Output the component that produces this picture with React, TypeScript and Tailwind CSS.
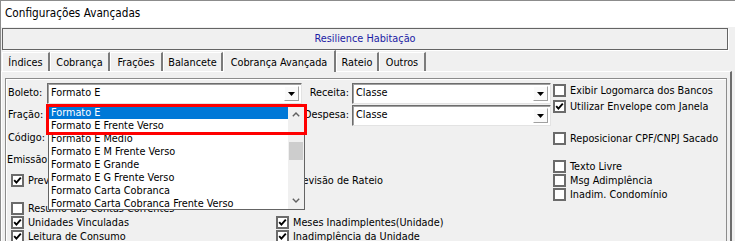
import React from 'react';

const Check = ({ checked }: { checked?: boolean }) => (
  <span className="w-[13px] h-[13px] border-2 border-[#6b6b6b] bg-white flex items-center justify-center shrink-0">
    {checked && (
      <svg width="9" height="9" viewBox="0 0 9 9">
        <path d="M1.2 4.2 L3.4 6.6 L7.8 1.6" stroke="#000" strokeWidth="1.9" fill="none" />
      </svg>
    )}
  </span>
);

const CheckRow = ({ label, checked, className = '' }: { label: string; checked?: boolean; className?: string }) => (
  <div className={`flex items-center gap-[4px] h-[14px] ${className}`}>
    <Check checked={checked} />
    <span className="leading-[13px] whitespace-nowrap">{label}</span>
  </div>
);

const Combo = ({ value, className = '' }: { value: string; className?: string }) => (
  <div className={`h-[21px] bg-white border border-t-[#6d6d6d] border-l-[#6d6d6d] border-r-[#e3e3e3] border-b-[#e3e3e3] shadow-[inset_1px_1px_0_#a0a0a0] flex items-center pl-[3px] pr-[2px] ${className}`}>
    <span className="flex-1 whitespace-nowrap">{value}</span>
    <span className="w-[15px] h-[15px] bg-[#fafafa] border-t border-l border-t-white border-l-white border-r border-b border-r-[#a0a0a0] border-b-[#a0a0a0] flex items-center justify-center">
      <svg width="7" height="4" viewBox="0 0 7 4">
        <path d="M0 0 H7 L3.5 4 Z" fill="#000" />
      </svg>
    </span>
  </div>
);

const TABS = ['Índices', 'Cobrança', 'Frações', 'Balancete', 'Cobrança Avançada', 'Rateio', 'Outros'];
const TAB_W = ['w-[48px]', 'w-[60px]', 'w-[53px]', 'w-[60px]', 'w-[113px]', 'w-[43px]', 'w-[47px]'];

const OPTIONS = [
  'Formato E',
  'Formato E Frente Verso',
  'Formato E Médio',
  'Formato E M Frente Verso',
  'Formato E Grande',
  'Formato E G Frente Verso',
  'Formato Carta Cobranca',
  'Formato Carta Cobranca Frente Verso',
];

export default function App() {
  return (
    <div className="relative w-[735px] h-[241px] overflow-hidden bg-[#f0f0f0] text-black font-['DejaVu_Sans_Condensed','Liberation_Sans',sans-serif] font-stretch-condensed text-[10.8px] border-l border-[#8c8c8c] flex flex-col">
      {/* Title */}
      <div className="h-[27px] shrink-0 bg-white border-t border-[#8c8c8c] flex items-center pl-[4px] text-[11.7px]">
        Configurações Avançadas
      </div>

      {/* Condomínio */}
      <div className="mt-[1px] ml-[1px] mr-[7px] h-[22px] shrink-0 border border-[#646464] shadow-[1px_1px_0_#ffffff] flex items-center justify-center text-[#1c1ca5]">
        Resilience Habitação
      </div>

      {/* Tabs */}
      <div className="h-[21px] shrink-0 flex items-end pl-[1px]">
        {TABS.map((t, i) =>
          i === 4 ? (
            <div key={t} className={`relative z-10 -mb-[1px] h-[22px] ${TAB_W[i]} bg-[#f0f0f0] border-t border-l border-white border-r-2 border-r-[#7b7b7b] pt-[3px] flex items-center justify-center whitespace-nowrap`}>
              {t}
            </div>
          ) : (
            <div key={t} className={`h-[19px] ${TAB_W[i]} border-t border-l border-white border-r-2 border-r-[#7b7b7b] pt-[2px] flex items-center justify-center whitespace-nowrap`}>
              {t}
            </div>
          )
        )}
      </div>

      {/* Tab page */}
      <div className="flex-1 mr-[3px] border-t border-l border-white border-r-2 border-r-[#6d6d6d] flex flex-col">
        <div className="mt-[6px] ml-[3px] mr-[3px] flex-1 border border-[#8c8c8c] shadow-[inset_1px_1px_0_#ffffff] flex">
          {/* left + middle */}
          <div className="w-[545px] flex flex-col">
            <div className="mt-[4px] h-[21px] flex items-center">
              <span className="w-[41px] pl-[2px]">Boleto:</span>
              <Combo value="Formato E" className="w-[255px]" />
              <span className="w-[50px] text-right pr-[3px]">Receita:</span>
              <Combo value="Classe" className="w-[199px]" />
            </div>
            <div className="mt-[1px] h-[21px] flex items-center">
              <span className="w-[41px] pl-[2px]">Fração:</span>
              <span className="w-[255px]" />
              <span className="w-[50px] text-right pr-[3px] whitespace-nowrap">Despesa:</span>
              <Combo value="Classe" className="w-[199px]" />
            </div>
            <div className="mt-[2px] h-[21px] flex items-center">
              <span className="pl-[2px]">Código:</span>
            </div>
            <div className="mt-[1px] h-[21px] flex items-center">
              <span className="pl-[1px]">Emissão:</span>
            </div>
            <div className="mt-[2px] flex pl-[5px]">
              <CheckRow label="Previsão Orçamentária" checked className="w-[265px]" />
              <CheckRow label="Previsão de Rateio" checked />
            </div>
            <div className="mt-[14px] flex pl-[5px]">
              <CheckRow label="Resumo das Contas Correntes" className="w-[265px]" />
            </div>
            <div className="flex pl-[5px]">
              <CheckRow label="Unidades Vinculadas" checked className="w-[265px]" />
              <CheckRow label="Meses Inadimplentes(Unidade)" checked />
            </div>
            <div className="flex pl-[5px]">
              <CheckRow label="Leitura de Consumo" checked className="w-[265px]" />
              <CheckRow label="Inadimplência da Unidade" checked />
            </div>
          </div>

          {/* right column */}
          <div className="ml-[2px] flex flex-col">
            <CheckRow label="Exibir Logomarca dos Bancos" className="mt-[4px]" />
            <CheckRow label="Utilizar Envelope com Janela" checked className="mt-[2px]" />
            <CheckRow label="Reposicionar CPF/CNPJ Sacado" className="mt-[18px]" />
            <CheckRow label="Texto Livre" className="mt-[14px]" />
            <CheckRow label="Msg Adimplência" />
            <CheckRow label="Inadim. Condomínio" />
          </div>
        </div>
      </div>

      {/* Dropdown list of Boleto */}
      <div className="absolute left-[47px] top-[105px] w-[257px] h-[105px] bg-white border border-[#646464] flex z-20">
        <div className="flex-1 flex flex-col">
          {OPTIONS.map((o, i) => (
            <div
              key={o}
              className={`h-[13px] leading-[13px] pl-[2px] whitespace-nowrap ${i === 0 ? 'bg-[#0078d7] text-white' : ''}`}
            >
              {o}
            </div>
          ))}
        </div>
        <div className="w-[16px] bg-[#f0f0f0] flex flex-col">
          <div className="h-[17px] flex items-center justify-center">
            <svg width="8" height="5" viewBox="0 0 8 5">
              <path d="M0.8 4.2 L4 1 L7.2 4.2" stroke="#606060" strokeWidth="1.4" fill="none" />
            </svg>
          </div>
          <div className="h-[19px]" />
          <div className="h-[18px] mx-[1px] bg-[#cdcdcd]" />
          <div className="flex-1" />
          <div className="h-[17px] flex items-center justify-center">
            <svg width="8" height="5" viewBox="0 0 8 5">
              <path d="M0.8 0.8 L4 4 L7.2 0.8" stroke="#606060" strokeWidth="1.4" fill="none" />
            </svg>
          </div>
        </div>
      </div>

      {/* Highlight frame */}
      <div className="absolute left-[45px] top-[104px] w-[261px] h-[31px] border-[3px] border-[#ff0000] z-30" />
    </div>
  );
}
